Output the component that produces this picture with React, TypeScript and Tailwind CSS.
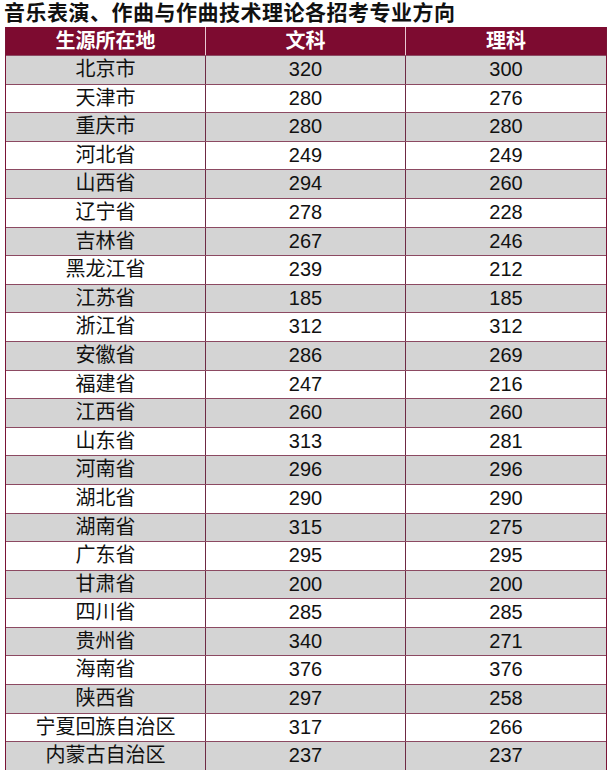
const rows: [string, number, number][] = [
  ["北京市", 320, 300],
  ["天津市", 280, 276],
  ["重庆市", 280, 280],
  ["河北省", 249, 249],
  ["山西省", 294, 260],
  ["辽宁省", 278, 228],
  ["吉林省", 267, 246],
  ["黑龙江省", 239, 212],
  ["江苏省", 185, 185],
  ["浙江省", 312, 312],
  ["安徽省", 286, 269],
  ["福建省", 247, 216],
  ["江西省", 260, 260],
  ["山东省", 313, 281],
  ["河南省", 296, 296],
  ["湖北省", 290, 290],
  ["湖南省", 315, 275],
  ["广东省", 295, 295],
  ["甘肃省", 200, 200],
  ["四川省", 285, 285],
  ["贵州省", 340, 271],
  ["海南省", 376, 376],
  ["陕西省", 297, 258],
  ["宁夏回族自治区", 317, 266],
  ["内蒙古自治区", 237, 237],
];

export default function App() {
  return (
    <div className="w-[612px] h-[771px] overflow-hidden bg-white text-[#111] font-['Liberation_Sans','Noto_Sans_CJK_SC',sans-serif]">
      <h1 className="h-[27px] pl-[4px] text-[21px] font-bold leading-[25px] tracking-[0.5px]">
        音乐表演、作曲与作曲技术理论各招考专业方向
      </h1>
      <div className="mx-[5px] w-[602px] border-l border-r border-[#7a1436]">
        <div className="grid grid-cols-3 h-[28px] bg-[#7d0b30] text-white text-[20px] font-bold leading-[28px] text-center">
          <div className="border-r border-[#e8c8d2]">生源所在地</div>
          <div className="border-r border-[#e8c8d2]">文科</div>
          <div>理科</div>
        </div>
        {rows.map((row, index) => (
          <div
            key={index}
            className={
              "grid grid-cols-3 h-[28.6px] text-[20px] leading-[27px] text-center border-t border-[#8c4a62] " +
              (index % 2 === 0 ? "bg-[#d4d4d4]" : "bg-white")
            }
          >
            <div className="border-r border-[#6e2a44]">{row[0]}</div>
            <div className="border-r border-[#6e2a44]">{row[1]}</div>
            <div>{row[2]}</div>
          </div>
        ))}
      </div>
    </div>
  );
}
